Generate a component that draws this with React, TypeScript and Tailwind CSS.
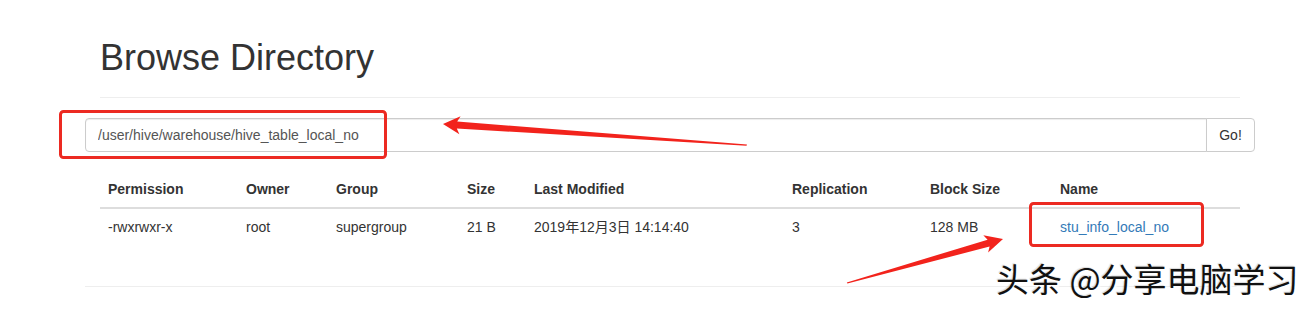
import React from 'react';

const columns = [
  { title: 'Permission', width: 'w-[138px]' },
  { title: 'Owner', width: 'w-[90px]' },
  { title: 'Group', width: 'w-[131px]' },
  { title: 'Size', width: 'w-[67px]' },
  { title: 'Last Modified', width: 'w-[258px]' },
  { title: 'Replication', width: 'w-[138px]' },
  { title: 'Block Size', width: 'w-[130px]' },
  { title: 'Name', width: 'w-[188px]' },
];

const row = ['-rwxrwxr-x', 'root', 'supergroup', '21 B', '2019年12月3日 14:14:40', '3', '128 MB'];

const Annotations: React.FC = () => (
  <svg className="pointer-events-none absolute left-0 top-0" width="1312" height="309" viewBox="0 0 1312 309">
    <rect x="60.5" y="111.5" width="325" height="46" rx="3" fill="none" stroke="#ec2a22" strokeWidth="3" />
    <rect x="1030.5" y="203.5" width="172" height="42" rx="3" fill="none" stroke="#ec2a22" strokeWidth="3" />
    <polygon
      fill="#f2231c"
      points="443,124 460.6,116.2 457.2,121.5 747,144.4 746.5,145.8 456.8,128.5 459.4,134.2"
    />
    <polygon
      fill="#f2231c"
      points="1003,239 983.3,235.2 987.6,239.7 846.8,282.4 847.4,283.6 989.6,246.5 988.1,252.6"
    />
  </svg>
);

const App: React.FC = () => {
  return (
    <div className="relative h-[309px] w-[1312px] overflow-hidden bg-white font-['Liberation_Sans','Noto_Sans_CJK_SC',sans-serif] text-[14px] text-[#333]">
      <div className="ml-[85px] w-[1170px]">
        <div className="mx-[15px] mt-[38px] border-b border-[#eee] pb-[19px]">
          <h1 className="text-[36px] leading-[40px] font-normal text-[#333]">Browse Directory</h1>
        </div>

        <div className="mt-[20px] flex h-[34px]">
          <input
            type="text"
            defaultValue="/user/hive/warehouse/hive_table_local_no"
            className="h-[34px] flex-1 rounded-l-[4px] border border-[#ccc] px-[12px] text-[14px] text-[#555] shadow-[inset_0_1px_1px_rgba(0,0,0,0.075)] outline-none"
          />
          <button className="-ml-px h-[34px] w-[49px] rounded-r-[4px] border border-[#ccc] bg-white text-[14px] text-[#333]">
            Go!
          </button>
        </div>

        <div className="mx-[15px] mt-[19px]">
          <table className="w-[1140px] table-fixed border-collapse">
            <thead>
              <tr>
                {columns.map((c) => (
                  <th
                    key={c.title}
                    className={`${c.width} border-b-2 border-[#ddd] p-[8px] text-left text-[14px] leading-[20px] font-bold`}
                  >
                    {c.title}
                  </th>
                ))}
              </tr>
            </thead>
            <tbody>
              <tr>
                {row.map((v, i) => (
                  <td key={i} className="p-[8px] text-[14px] leading-[20px]">
                    {v}
                  </td>
                ))}
                <td className="p-[8px] text-[14px] leading-[20px]">
                  <a href="#" className="text-[#337ab7]">stu_info_local_no</a>
                </td>
              </tr>
            </tbody>
          </table>
        </div>

        <div className="mt-[41px] border-t border-[#eee]" />
      </div>

      <Annotations />

      <div className="absolute left-[996px] top-[262px] font-['Noto_Sans_CJK_SC',sans-serif] text-[33px] leading-[33px] font-normal whitespace-nowrap text-[#111] [text-shadow:2px_2px_1px_rgba(255,255,255,0.95),-1px_-1px_1px_rgba(0,0,0,0.15)]">
        头条 @分享电脑学习
      </div>
    </div>
  );
};

export default App;
